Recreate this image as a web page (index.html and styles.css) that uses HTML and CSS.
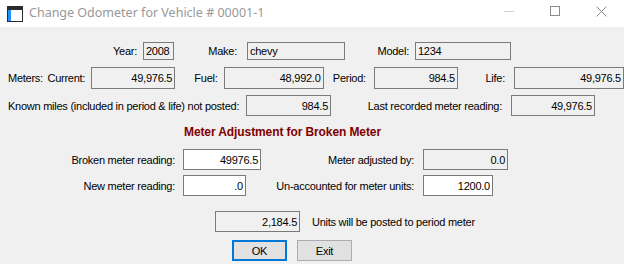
FILE: index.html
```html
<!DOCTYPE html>
<html lang="en">
<head>
  <meta charset="UTF-8">
  <title>Change Odometer</title>
  <link rel="stylesheet" href="styles.css">
</head>
<body>
  <div class="window">
    <div class="titlebar">
      <svg class="app-icon" width="16" height="16" viewBox="0 0 16 16">
        <rect x="0.5" y="0.5" width="15" height="15" fill="#fff" stroke="#2b2b2b"/>
        <rect x="1" y="1" width="14" height="3" fill="#2b2b2b"/>
        <rect x="1" y="4" width="3" height="11" fill="#1e90ff"/>
      </svg>
      <span class="title">Change Odometer for Vehicle # 00001-1</span>
      <div class="controls">
        <div class="ctl"><svg width="10" height="10" viewBox="0 0 10 10"><line x1="0" y1="5.5" x2="10" y2="5.5" stroke="#d0d0d0"/></svg></div>
        <div class="ctl"><svg width="10" height="10" viewBox="0 0 10 10"><rect x="0.5" y="0.5" width="9" height="9" fill="none" stroke="#8c8c8c"/></svg></div>
        <div class="ctl"><svg width="11" height="11" viewBox="0 0 11 11"><path d="M0.5 0.5L10.5 10.5M10.5 0.5L0.5 10.5" stroke="#8c8c8c"/></svg></div>
      </div>
    </div>

    <div class="content">
      <div class="row row-vehicle">
        <span class="lbl w-year">Year:</span>
        <div class="field left w31">2008</div>
        <span class="lbl w-make">Make:</span>
        <div class="field left w98">chevy</div>
        <span class="lbl w-model">Model:</span>
        <div class="field left w96">1234</div>
      </div>

      <div class="row row-meters">
        <span class="txt w-meters">Meters:</span>
        <span class="lbl w-current">Current:</span>
        <div class="field w84">49,976.5</div>
        <span class="lbl w-fuel">Fuel:</span>
        <div class="field w100">48,992.0</div>
        <span class="lbl w-period">Period:</span>
        <div class="field w84">984.5</div>
        <span class="lbl w-life">Life:</span>
        <div class="field w110">49,976.5</div>
      </div>

      <div class="row row-known">
        <span class="txt w-known">Known miles (included in period &amp; life) not posted:</span>
        <div class="field w85">984.5</div>
        <span class="lbl w-last">Last recorded meter reading:</span>
        <div class="field w84">49,976.5</div>
      </div>

      <div class="heading">Meter Adjustment for Broken Meter</div>

      <div class="row row-broken">
        <span class="lbl w-left">Broken meter reading:</span>
        <div class="field edit w78">49976.5</div>
        <span class="lbl w-adj">Meter adjusted by:</span>
        <div class="field w85">0.0</div>
      </div>

      <div class="row row-new">
        <span class="lbl w-left">New meter reading:</span>
        <div class="field edit w63">.0</div>
        <span class="lbl w-unacc">Un-accounted for meter units:</span>
        <div class="field edit w70">1200.0</div>
      </div>

      <div class="row row-units">
        <div class="field w85">2,184.5</div>
        <span class="note">Units will be posted to period meter</span>
      </div>

      <div class="row row-buttons">
        <button class="btn default">OK</button>
        <button class="btn">Exit</button>
      </div>
    </div>
  </div>
</body>
</html>
```

FILE: styles.css
```css
body {
  margin: 0;
  background: #f0f0f0;
  font-family: "Liberation Sans", Arial, sans-serif;
  font-size: 11px;
  letter-spacing: -0.25px;
  color: #000;
}
.window {
  width: 624px;
  height: 264px;
  overflow: hidden;
  background: #f0f0f0;
}
.titlebar {
  height: 27px;
  background: #fff;
  display: flex;
  align-items: flex-start;
}
.app-icon {
  margin: 6px 0 0 7px;
}
.title {
  font-family: "Noto Sans", "Open Sans", sans-serif;
  font-size: 12.5px;
  letter-spacing: 0;
  color: #999;
  margin: 4px 0 0 6px;
}
.controls {
  margin-left: auto;
  display: flex;
}
.ctl {
  width: 46px;
  height: 22px;
  display: flex;
  justify-content: center;
  padding-top: 6px;
  box-sizing: border-box;
}

.content {
  display: flex;
  flex-direction: column;
}
.row {
  display: flex;
  align-items: center;
  white-space: nowrap;
}
.row-vehicle { margin-top: 15px; height: 18px; }
.row-meters { margin-top: 7px; height: 22px; }
.row-known { margin-top: 6px; height: 21px; }
.row-broken { margin-top: 10px; height: 21px; }
.row-new { margin-top: 5px; height: 21px; }
.row-units { margin-top: 15px; height: 21px; padding-left: 215px; }
.row-buttons { margin-top: 8px; height: 21px; padding-left: 232px; gap: 10px; }

.heading {
  margin-top: 9px;
  height: 14px;
  line-height: 14px;
  padding-left: 184px;
  font-weight: bold;
  font-size: 12px;
  letter-spacing: -0.1px;
  color: #800000;
}

.lbl {
  box-sizing: border-box;
  text-align: right;
  padding-right: 6px;
}
.txt {
  box-sizing: border-box;
  padding-left: 8px;
}
.w-year { width: 143px; }
.w-make { width: 73px; padding-right: 10px; }
.w-model { width: 70px; }
.w-meters { width: 49px; }
.w-current { width: 47px; }
.w-fuel { width: 51px; }
.w-period { width: 53px; padding-right: 8px; }
.w-life { width: 59px; padding-right: 9px; }
.w-known { width: 246px; }
.w-last { width: 180px; padding-right: 9px; }
.w-left { width: 183px; padding-right: 8px; }
.w-adj { width: 162px; padding-right: 9px; }
.w-unacc { width: 177px; padding-right: 9px; }

.field {
  box-sizing: border-box;
  height: 100%;
  border: 1px solid #7a7a7a;
  background: #f0f0f0;
  text-align: right;
  padding: 0 2px;
  display: flex;
  align-items: center;
  justify-content: flex-end;
  flex-shrink: 0;
}
.field.left { justify-content: flex-start; }
.field.edit { background: #fff; }
.w31 { width: 31px; }
.w63 { width: 63px; }
.w70 { width: 70px; }
.w78 { width: 78px; }
.w84 { width: 84px; }
.w85 { width: 85px; }
.w96 { width: 96px; }
.w98 { width: 98px; }
.w100 { width: 100px; }
.w110 { width: 110px; }

.note {
  padding-left: 12px;
}
.btn {
  box-sizing: border-box;
  width: 55px;
  height: 21px;
  background: #e1e1e1;
  border: 1px solid #adadad;
  font-family: "Liberation Sans", Arial, sans-serif;
  font-size: 11px;
  letter-spacing: -0.25px;
  padding: 0;
  color: #000;
}
.btn.default {
  border: 2px solid #0078d7;
}
```
